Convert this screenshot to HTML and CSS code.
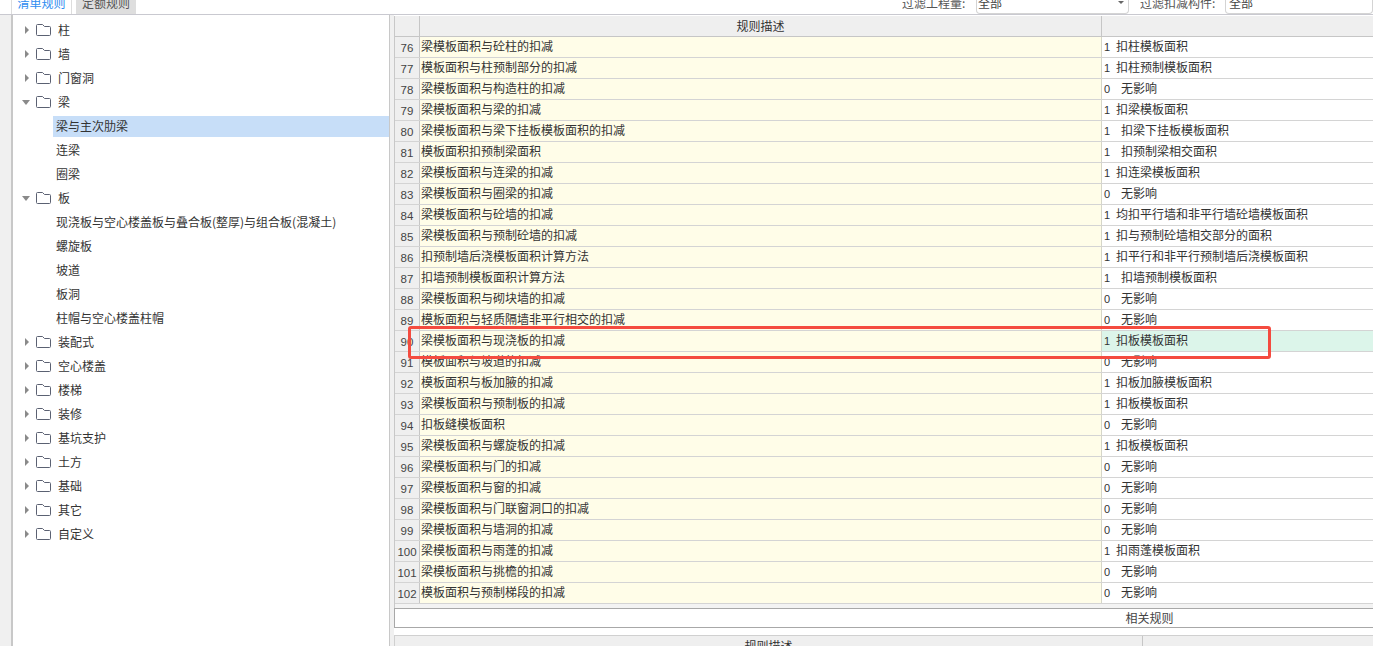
FILE: index.html
```html
<!DOCTYPE html>
<html lang="zh-CN">
<head>
<meta charset="utf-8">
<title>规则</title>
<link rel="stylesheet" href="styles.css">
</head>
<body>
<svg class="defs" width="0" height="0"><symbol id="folder" viewBox="0 0 15 12"><path d="M1.5.5H6.5L8.5 2.5H13.5Q14.5 2.5 14.5 3.5V10.500Q14.500 11.500 13.500 11.500H1.500Q.5 11.500 .5 10.500V1.500Q.5.5 1.500.5Z" fill="none" stroke="#5b6172"/></symbol></svg>
<div class="app">
  <header class="topbar">
    <div class="tab tab-active">清单规则</div>
    <div class="tab tab-idle">定额规则</div>
    <div class="filters">
      <span class="f-label f-label-a">过滤工程量:</span>
      <span class="f-select f-select-a">全部<i class="caret"></i></span>
      <span class="f-label f-label-b">过滤扣减构件:</span>
      <span class="f-select f-select-b">全部</span>
    </div>
  </header>
  <main class="main">
    <nav class="tree">
      <div class="node"><i class="tw tw-r"></i><svg class="fd"><use href="#folder"/></svg><span>柱</span></div>
      <div class="node"><i class="tw tw-r"></i><svg class="fd"><use href="#folder"/></svg><span>墙</span></div>
      <div class="node"><i class="tw tw-r"></i><svg class="fd"><use href="#folder"/></svg><span>门窗洞</span></div>
      <div class="node"><i class="tw tw-d"></i><svg class="fd"><use href="#folder"/></svg><span>梁</span></div>
      <div class="leaf leaf-on"><span>梁与主次肋梁</span></div>
      <div class="leaf"><span>连梁</span></div>
      <div class="leaf"><span>圈梁</span></div>
      <div class="node"><i class="tw tw-d"></i><svg class="fd"><use href="#folder"/></svg><span>板</span></div>
      <div class="leaf"><span>现浇板与空心楼盖板与叠合板(整厚)与组合板(混凝土)</span></div>
      <div class="leaf"><span>螺旋板</span></div>
      <div class="leaf"><span>坡道</span></div>
      <div class="leaf"><span>板洞</span></div>
      <div class="leaf"><span>柱帽与空心楼盖柱帽</span></div>
      <div class="node"><i class="tw tw-r"></i><svg class="fd"><use href="#folder"/></svg><span>装配式</span></div>
      <div class="node"><i class="tw tw-r"></i><svg class="fd"><use href="#folder"/></svg><span>空心楼盖</span></div>
      <div class="node"><i class="tw tw-r"></i><svg class="fd"><use href="#folder"/></svg><span>楼梯</span></div>
      <div class="node"><i class="tw tw-r"></i><svg class="fd"><use href="#folder"/></svg><span>装修</span></div>
      <div class="node"><i class="tw tw-r"></i><svg class="fd"><use href="#folder"/></svg><span>基坑支护</span></div>
      <div class="node"><i class="tw tw-r"></i><svg class="fd"><use href="#folder"/></svg><span>土方</span></div>
      <div class="node"><i class="tw tw-r"></i><svg class="fd"><use href="#folder"/></svg><span>基础</span></div>
      <div class="node"><i class="tw tw-r"></i><svg class="fd"><use href="#folder"/></svg><span>其它</span></div>
      <div class="node"><i class="tw tw-r"></i><svg class="fd"><use href="#folder"/></svg><span>自定义</span></div>
    </nav>
    <section class="pane">
      <div class="grid">
        <div class="hrow"><div class="c-num"></div><div class="c-desc hcell">规则描述</div><div class="c-val"></div></div>
        <div class="row"><div class="c-num">76</div><div class="c-desc">梁模板面积与砼柱的扣减</div><div class="c-val"><b>1</b>扣柱模板面积</div></div>
        <div class="row"><div class="c-num">77</div><div class="c-desc">模板面积与柱预制部分的扣减</div><div class="c-val"><b>1</b>扣柱预制模板面积</div></div>
        <div class="row"><div class="c-num">78</div><div class="c-desc">梁模板面积与构造柱的扣减</div><div class="c-val"><b class="w">0</b>无影响</div></div>
        <div class="row"><div class="c-num">79</div><div class="c-desc">梁模板面积与梁的扣减</div><div class="c-val"><b>1</b>扣梁模板面积</div></div>
        <div class="row"><div class="c-num">80</div><div class="c-desc">梁模板面积与梁下挂板模板面积的扣减</div><div class="c-val"><b class="w">1</b>扣梁下挂板模板面积</div></div>
        <div class="row"><div class="c-num">81</div><div class="c-desc">模板面积扣预制梁面积</div><div class="c-val"><b class="w">1</b>扣预制梁相交面积</div></div>
        <div class="row"><div class="c-num">82</div><div class="c-desc">梁模板面积与连梁的扣减</div><div class="c-val"><b>1</b>扣连梁模板面积</div></div>
        <div class="row"><div class="c-num">83</div><div class="c-desc">梁模板面积与圈梁的扣减</div><div class="c-val"><b class="w">0</b>无影响</div></div>
        <div class="row"><div class="c-num">84</div><div class="c-desc">梁模板面积与砼墙的扣减</div><div class="c-val"><b>1</b>均扣平行墙和非平行墙砼墙模板面积</div></div>
        <div class="row"><div class="c-num">85</div><div class="c-desc">梁模板面积与预制砼墙的扣减</div><div class="c-val"><b>1</b>扣与预制砼墙相交部分的面积</div></div>
        <div class="row"><div class="c-num">86</div><div class="c-desc">扣预制墙后浇模板面积计算方法</div><div class="c-val"><b>1</b>扣平行和非平行预制墙后浇模板面积</div></div>
        <div class="row"><div class="c-num">87</div><div class="c-desc">扣墙预制模板面积计算方法</div><div class="c-val"><b class="w">1</b>扣墙预制模板面积</div></div>
        <div class="row"><div class="c-num">88</div><div class="c-desc">梁模板面积与砌块墙的扣减</div><div class="c-val"><b class="w">0</b>无影响</div></div>
        <div class="row"><div class="c-num">89</div><div class="c-desc">模板面积与轻质隔墙非平行相交的扣减</div><div class="c-val"><b class="w">0</b>无影响</div></div>
        <div class="row"><div class="c-num">90</div><div class="c-desc">梁模板面积与现浇板的扣减</div><div class="c-val c-mark"><b>1</b>扣板模板面积</div></div>
        <div class="row"><div class="c-num">91</div><div class="c-desc">模板面积与坡道的扣减</div><div class="c-val"><b class="w">0</b>无影响</div></div>
        <div class="row"><div class="c-num">92</div><div class="c-desc">模板面积与板加腋的扣减</div><div class="c-val"><b>1</b>扣板加腋模板面积</div></div>
        <div class="row"><div class="c-num">93</div><div class="c-desc">梁模板面积与预制板的扣减</div><div class="c-val"><b>1</b>扣板模板面积</div></div>
        <div class="row"><div class="c-num">94</div><div class="c-desc">扣板缝模板面积</div><div class="c-val"><b class="w">0</b>无影响</div></div>
        <div class="row"><div class="c-num">95</div><div class="c-desc">梁模板面积与螺旋板的扣减</div><div class="c-val"><b>1</b>扣板模板面积</div></div>
        <div class="row"><div class="c-num">96</div><div class="c-desc">梁模板面积与门的扣减</div><div class="c-val"><b class="w">0</b>无影响</div></div>
        <div class="row"><div class="c-num">97</div><div class="c-desc">梁模板面积与窗的扣减</div><div class="c-val"><b class="w">0</b>无影响</div></div>
        <div class="row"><div class="c-num">98</div><div class="c-desc">梁模板面积与门联窗洞口的扣减</div><div class="c-val"><b class="w">0</b>无影响</div></div>
        <div class="row"><div class="c-num">99</div><div class="c-desc">梁模板面积与墙洞的扣减</div><div class="c-val"><b class="w">0</b>无影响</div></div>
        <div class="row"><div class="c-num">100</div><div class="c-desc">梁模板面积与雨蓬的扣减</div><div class="c-val"><b>1</b>扣雨蓬模板面积</div></div>
        <div class="row"><div class="c-num">101</div><div class="c-desc">梁模板面积与挑檐的扣减</div><div class="c-val"><b class="w">0</b>无影响</div></div>
        <div class="row"><div class="c-num">102</div><div class="c-desc">模板面积与预制梯段的扣减</div><div class="c-val"><b class="w">0</b>无影响</div></div>
      </div>
      <div class="related">相关规则</div>
      <div class="subhead"><div class="sub-desc">规则描述</div><div class="sub-val"></div></div>
    </section>
  </main>
</div>
<div class="callout"></div>
</body>
</html>
```
FILE: styles.css
```css
* { box-sizing: border-box; }
html, body { margin: 0; padding: 0; height: 646px; overflow: hidden; background: #fff; }
body { font: 12px/20px "Noto Sans CJK SC", "Liberation Sans", sans-serif; color: #333; }
.defs { position: absolute; }
.app { width: 1373px; height: 646px; overflow: hidden; display: flex; flex-direction: column; }

.topbar { height: 15px; flex: none; display: flex; align-items: flex-end; padding-left: 11px; border-bottom: 1px solid #c9c9d0; overflow: hidden; background: #fff; }
.tab { width: 60px; height: 21px; text-align: center; flex: none; }
.tab-active { width: 61px; color: #2d8cf0; border-left: 1px solid #ddd; border-right: 1px solid #ddd; background: #fff; }
.tab-idle { margin-left: 4px; background: #dedede; color: #555; }
.filters { margin-left: auto; display: flex; align-items: flex-end; height: 21px; flex: none; color: #555; }
.f-label { display: block; height: 21px; }
.f-label-a { width: 74px; }
.f-label-b { width: 96px; padding-left: 11px; }
.f-select { display: block; position: relative; height: 21px; padding-left: 1px; border: 1px solid #d4d4d4; border-top: 0; border-radius: 0 0 4px 4px; color: #444; }
.f-select-a { width: 153px; }
.f-select-b { width: 148px; padding-left: 3px; }
.caret { position: absolute; right: 4px; bottom: 9px; border: 3px solid transparent; border-top: 3px solid #666; border-bottom: 0; }

.main { flex: 1; display: flex; min-height: 0; padding-left: 11px; background: #f0f0f0; }
.tree { width: 379px; flex: none; padding-top: 3px; border-left: 2px solid #c8c8c8; border-right: 1px solid #c8c8c8; background: #fff; }
.node, .leaf { height: 24px; display: flex; align-items: center; white-space: nowrap; }
.node { padding-left: 10px; }
.tw { display: block; width: 13px; height: 9px; position: relative; flex: none; }
.tw::after { content: ""; position: absolute; border-style: solid; border-color: transparent; }
.tw-r::after { left: 2px; top: 0; border-width: 4px 0 4px 4px; border-left-color: #8a8a8a; }
.tw-d::after { left: -1px; top: 2px; border-width: 5px 4px 0; border-top-color: #8a8a8a; }
.fd { width: 15px; height: 12px; flex: none; margin: 0 7px 0 0; }
.leaf { padding-left: 40px; }
.leaf span { display: block; padding-left: 3px; height: 21px; line-height: 20px; width: 100%; }
.leaf-on span { background: #c7def8; }

.pane { flex: none; width: 979px; margin-left: 4px; overflow: hidden; background: #fff; padding-top: 1px; }
.grid { background: #f3f3f3; height: 592px; width: 979px; border-left: 1px solid #c8c8c8; }
.hrow, .row { display: flex; width: 978px; }
.hrow { height: 21px; background: #efefef; border-bottom: 1px solid #c6c6c6; }
.row { height: 21px; border-bottom: 1px solid #d4d4d4; line-height: 18px; }
.c-num { width: 25px; flex: none; background: #efefef; border-right: 1px solid #c6c6c6; text-align: center; font-family: "Liberation Sans", sans-serif; font-size: 11.5px; line-height: 22px; color: #444; }
.c-desc { width: 682px; flex: none; background: #fffde8; border-right: 1px solid #d6d6c8; padding-left: 1px; white-space: nowrap; }
.hrow .c-num, .hrow .c-desc { background: #efefef; border-right-color: #c6c6c6; }
.hcell { text-align: center; padding-left: 0; }
.c-val { flex: 1; background: #fff; padding-left: 2px; white-space: nowrap; }
.hrow .c-val { background: #efefef; }
.c-val b { display: inline-block; width: 12px; font-weight: 400; font-family: "Liberation Sans", sans-serif; font-size: 11px; }
.c-val b.w { width: 17px; }
.c-mark { background: #dcf5ea; }

.related { width: 1510px; height: 20px; border-top: 1px solid #a8a8a8; border-bottom: 1px solid #a8a8a8; border-left: 1px solid #a8a8a8; background: #fff; text-align: center; line-height: 18px; color: #444; }
.subhead { display: flex; width: 979px; height: 30px; margin-top: 7px; background: #efefef; border-top: 1px solid #d0d0d0; border-left: 1px solid #d0d0d0; }
.sub-desc { width: 748px; flex: none; border-right: 1px solid #c6c6c6; text-align: center; line-height: 20px; }
.sub-val { flex: 1; }

.callout { position: absolute; left: 408px; top: 326px; width: 863px; height: 33px; border: 3px solid #f44b3f; border-radius: 3px; }
```
